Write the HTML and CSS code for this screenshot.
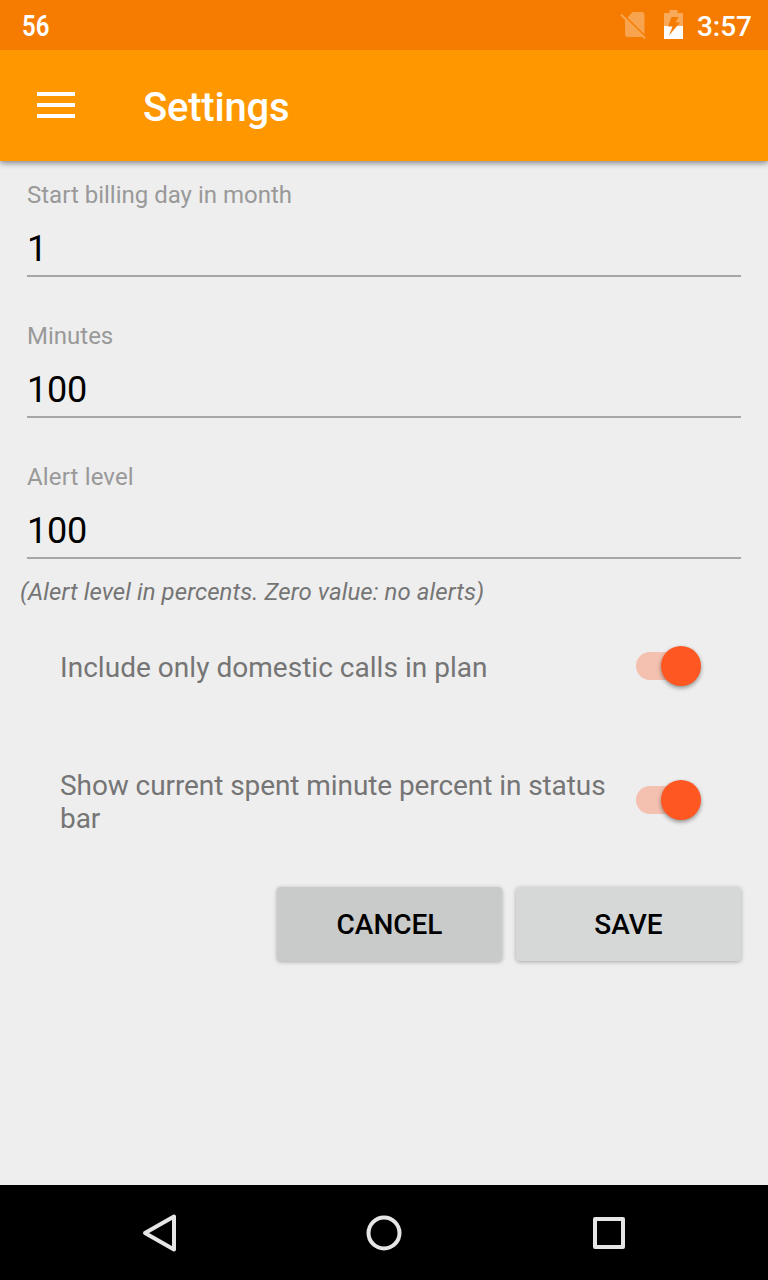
FILE: index.html
```html
<!DOCTYPE html>
<html lang="en">
<head>
<meta charset="utf-8">
<title>Settings</title>
<link rel="stylesheet" href="styles.css">
</head>
<body>
<div class="screen">
  <div class="status-bar">
    <span class="percent">56</span>
    <svg class="sim" width="28" height="30" viewBox="0 0 28 30"><path fill="#fff" fill-opacity=".3" d="M12.500 2H21.500a3 3 0 0 1 3 3v19.500L7.500 7.500z"/><path fill="#fff" fill-opacity=".3" d="M5 9.500 22.500 27H8a3 3 0 0 1-3-3z"/><path stroke="#fff" stroke-opacity=".3" stroke-width="2" d="M1 4.500 25.300 28.500"/></svg>
    <svg class="battery" width="20" height="30" viewBox="0 0 20 30"><path fill="#fff" fill-opacity=".35" d="M5.500 0h8v3H18a1 1 0 0 1 1 1v12H0V4a1 1 0 0 1 1-1h4.500z"/><path fill="#fff" d="M0 16h19v13H0z"/><path fill="#f57c00" d="M7.500 7H14.500L11.500 12.500H16L5 25.500 8.500 16.500H4z"/></svg>
    <span class="clock">3:57</span>
  </div>
  <header class="app-bar">
    <svg width="38" height="26" viewBox="0 0 38 26" fill="#fff"><path d="M0 0h38v4H0zM0 11h38v4H0zM0 22h38v4H0z"/></svg>
    <h1 class="title">Settings</h1>
  </header>
  <main class="content">
    <div class="field"><div class="label">Start billing day in month</div><div class="value">1</div></div>
    <div class="field"><div class="label">Minutes</div><div class="value">100</div></div>
    <div class="field"><div class="label label-alert">Alert level</div><div class="value">100</div></div>
    <p class="hint">(Alert level in percents. Zero value: no alerts)</p>
    <div class="option option-short"><span class="option-text">Include only domestic calls in plan</span><span class="switch"><span class="thumb"></span></span></div>
    <div class="option option-tall"><span class="option-text">Show current spent minute percent in status bar</span><span class="switch"><span class="thumb"></span></span></div>
    <div class="actions"><button class="button cancel">CANCEL</button><button class="button">SAVE</button></div>
  </main>
  <nav class="nav-bar">
    <svg width="40" height="40" viewBox="0 0 40 40"><path d="M6 20 35 3.500v33z"/></svg>
    <svg width="40" height="40" viewBox="0 0 40 40"><circle cx="20" cy="20" r="15.500"/></svg>
    <svg width="40" height="40" viewBox="0 0 40 40"><path d="M6 6h28v28H6z"/></svg>
  </nav>
</div>
</body>
</html>
```
FILE: styles.css
```css
* { box-sizing: border-box; }
body { margin: 0; font-family: Roboto, sans-serif; }
.screen { width: 768px; height: 1280px; display: flex; flex-direction: column; background: #eee; overflow: hidden; }
.status-bar { height: 50px; flex: none; display: flex; align-items: flex-start; padding: 10px 16px 0 22px; background: #f57c00; color: #fff; position: relative; z-index: 2; }
.percent { font-size: 30px; line-height: 31px; font-weight: 600; margin-right: auto; transform: scaleX(.8); transform-origin: left; }
.sim { margin-right: 16px; }
.battery { margin-right: 13px; }
.clock { font-size: 28px; line-height: 33px; font-weight: 500; }
.app-bar { height: 111px; flex: none; display: flex; align-items: center; gap: 68px; padding: 0 37px; background: #ff9800; box-shadow: 0 2px 6px rgba(0, 0, 0, .45); position: relative; z-index: 1; }
.app-bar svg { display: block; margin-bottom: 1px; }
.title { margin: 3px 0 0; color: #fff; font-size: 40px; line-height: 47px; font-weight: 500; letter-spacing: -.2px; }
.content { flex: 1; padding: 19px 26px 0 27px; }
.field { height: 97px; margin: 0 1px 44px 0; border-bottom: 2px solid #a7a7a7; }
.label { font-size: 24px; line-height: 30px; color: #999; }
.label-alert { letter-spacing: .15px; }
.value { margin-top: 17px; font-size: 36px; line-height: 44px; letter-spacing: -.2px; color: #000; }
.hint { margin: -26px 0 0 -7px; font-size: 24px; line-height: 30px; letter-spacing: .075px; font-style: italic; color: #757575; }
.option { display: flex; align-items: center; justify-content: space-between; padding: 0 41px 0 33px; color: #757575; font-size: 28px; line-height: 33px; }
.option-short { height: 118px; letter-spacing: .03px; }
.option-tall { height: 150px; letter-spacing: -.08px; }
.option-text { width: 560px; margin-top: 2px; }
.option-tall .option-text { margin-top: 4px; }
.switch { flex: none; width: 65px; height: 28px; display: flex; align-items: center; justify-content: flex-end; background: linear-gradient(#f4c1b1, #f4c1b1) left / 48px 28px no-repeat; border-radius: 14px; }
.thumb { width: 40px; height: 40px; flex: none; border-radius: 50%; background: #ff5722; box-shadow: 0 2px 4px rgba(0, 0, 0, .4); }
.actions { display: flex; justify-content: flex-end; gap: 14px; margin: 12px 1px 0 0; }
.button { width: 225px; height: 74px; padding: 0; border: 0; border-radius: 4px; background: #d6d8d7; box-shadow: 0 1px 4px rgba(0, 0, 0, .3); color: #000; font: 500 28px/33px Roboto, sans-serif; }
.cancel { background: #c9cbca; }
.nav-bar { height: 95px; flex: none; display: flex; justify-content: space-between; align-items: center; padding: 1px 139px 0; background: #000; }
.nav-bar svg { fill: none; stroke: #e6e6e6; stroke-width: 4; stroke-linejoin: round; }
```
